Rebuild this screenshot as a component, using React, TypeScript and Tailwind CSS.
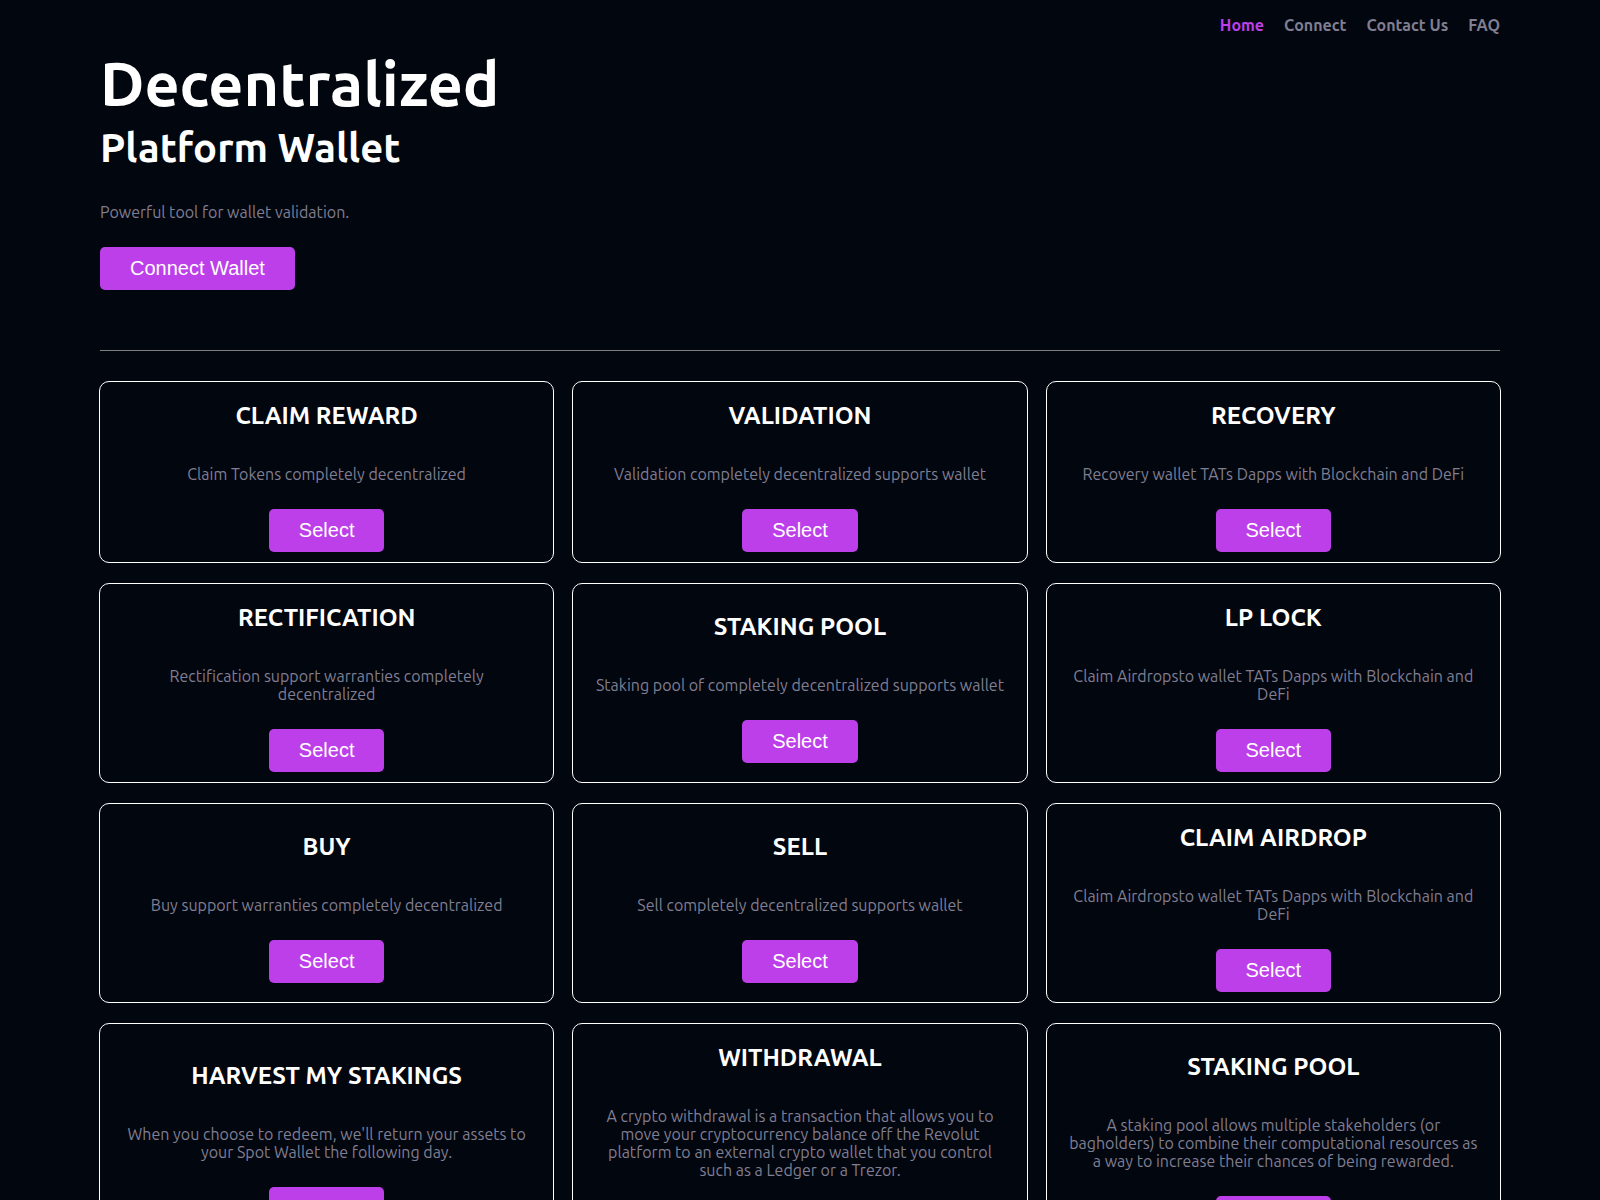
type Card = { title: string; text: string };

const links = ["Home", "Connect", "Contact Us", "FAQ"];

const cards: Card[] = [
  { title: "CLAIM REWARD", text: "Claim Tokens completely decentralized" },
  { title: "VALIDATION", text: "Validation completely decentralized supports wallet" },
  { title: "RECOVERY", text: "Recovery wallet TATs Dapps with Blockchain and DeFi" },
  { title: "RECTIFICATION", text: "Rectification support warranties completely decentralized" },
  { title: "STAKING POOL", text: "Staking pool of completely decentralized supports wallet" },
  { title: "LP LOCK", text: "Claim Airdropsto wallet TATs Dapps with Blockchain and DeFi" },
  { title: "BUY", text: "Buy support warranties completely decentralized" },
  { title: "SELL", text: "Sell completely decentralized supports wallet" },
  { title: "CLAIM AIRDROP", text: "Claim Airdropsto wallet TATs Dapps with Blockchain and DeFi" },
  {
    title: "HARVEST MY STAKINGS",
    text: "When you choose to redeem, we'll return your assets to your Spot Wallet the following day.",
  },
  {
    title: "WITHDRAWAL",
    text: "A crypto withdrawal is a transaction that allows you to move your cryptocurrency balance off the Revolut platform to an external crypto wallet that you control such as a Ledger or a Trezor.",
  },
  {
    title: "STAKING POOL",
    text: "A staking pool allows multiple stakeholders (or bagholders) to combine their computational resources as a way to increase their chances of being rewarded.",
  },
];

function Button({ children }: { children: string }) {
  return (
    <button
      type="button"
      className="cursor-pointer rounded-[5px] bg-[#bd3fea] px-[30px] py-2.5 font-['Liberation_Sans',sans-serif] text-xl leading-[23px] text-white"
    >
      {children}
    </button>
  );
}

function ServiceCard({ title, text }: Card) {
  return (
    <article className="flex flex-col items-center justify-center rounded-[10px] border border-white px-5 py-2.5 text-center">
      <h3 className="mt-2.5 text-2xl leading-7 font-bold text-white">{title}</h3>
      <p className="mt-[35px] mb-[26px] leading-[18px]">{text}</p>
      <Button>Select</Button>
    </article>
  );
}

export default function App() {
  return (
    <div className="min-h-screen bg-[#02060e] px-[100px] pb-5 font-[Ubuntu,'Open_Sans',sans-serif] text-base text-[#807e92]">
      <nav className="flex justify-end gap-5 pt-4 leading-[18px] font-bold">
        {links.map((label, i) => (
          <a key={label} href="#" className={i === 0 ? "text-[#bd3fea]" : undefined}>
            {label}
          </a>
        ))}
      </nav>
      <header className="pt-[18px] pb-[60px]">
        <h1 className="text-[61px] leading-[64px] font-bold text-white">Decentralized</h1>
        <h2 className="mt-[9px] text-[40px] leading-[46px] font-bold text-white">Platform Wallet</h2>
        <p className="mt-8 mb-[26px] leading-[18px]">Powerful tool for wallet validation.</p>
        <Button>Connect Wallet</Button>
      </header>
      <hr className="border-[#808080]" />
      <main className="-mx-px mt-[30px] grid grid-cols-3 gap-x-[18px] gap-y-5">
        {cards.map((card, i) => (
          <ServiceCard key={i} {...card} />
        ))}
      </main>
    </div>
  );
}
